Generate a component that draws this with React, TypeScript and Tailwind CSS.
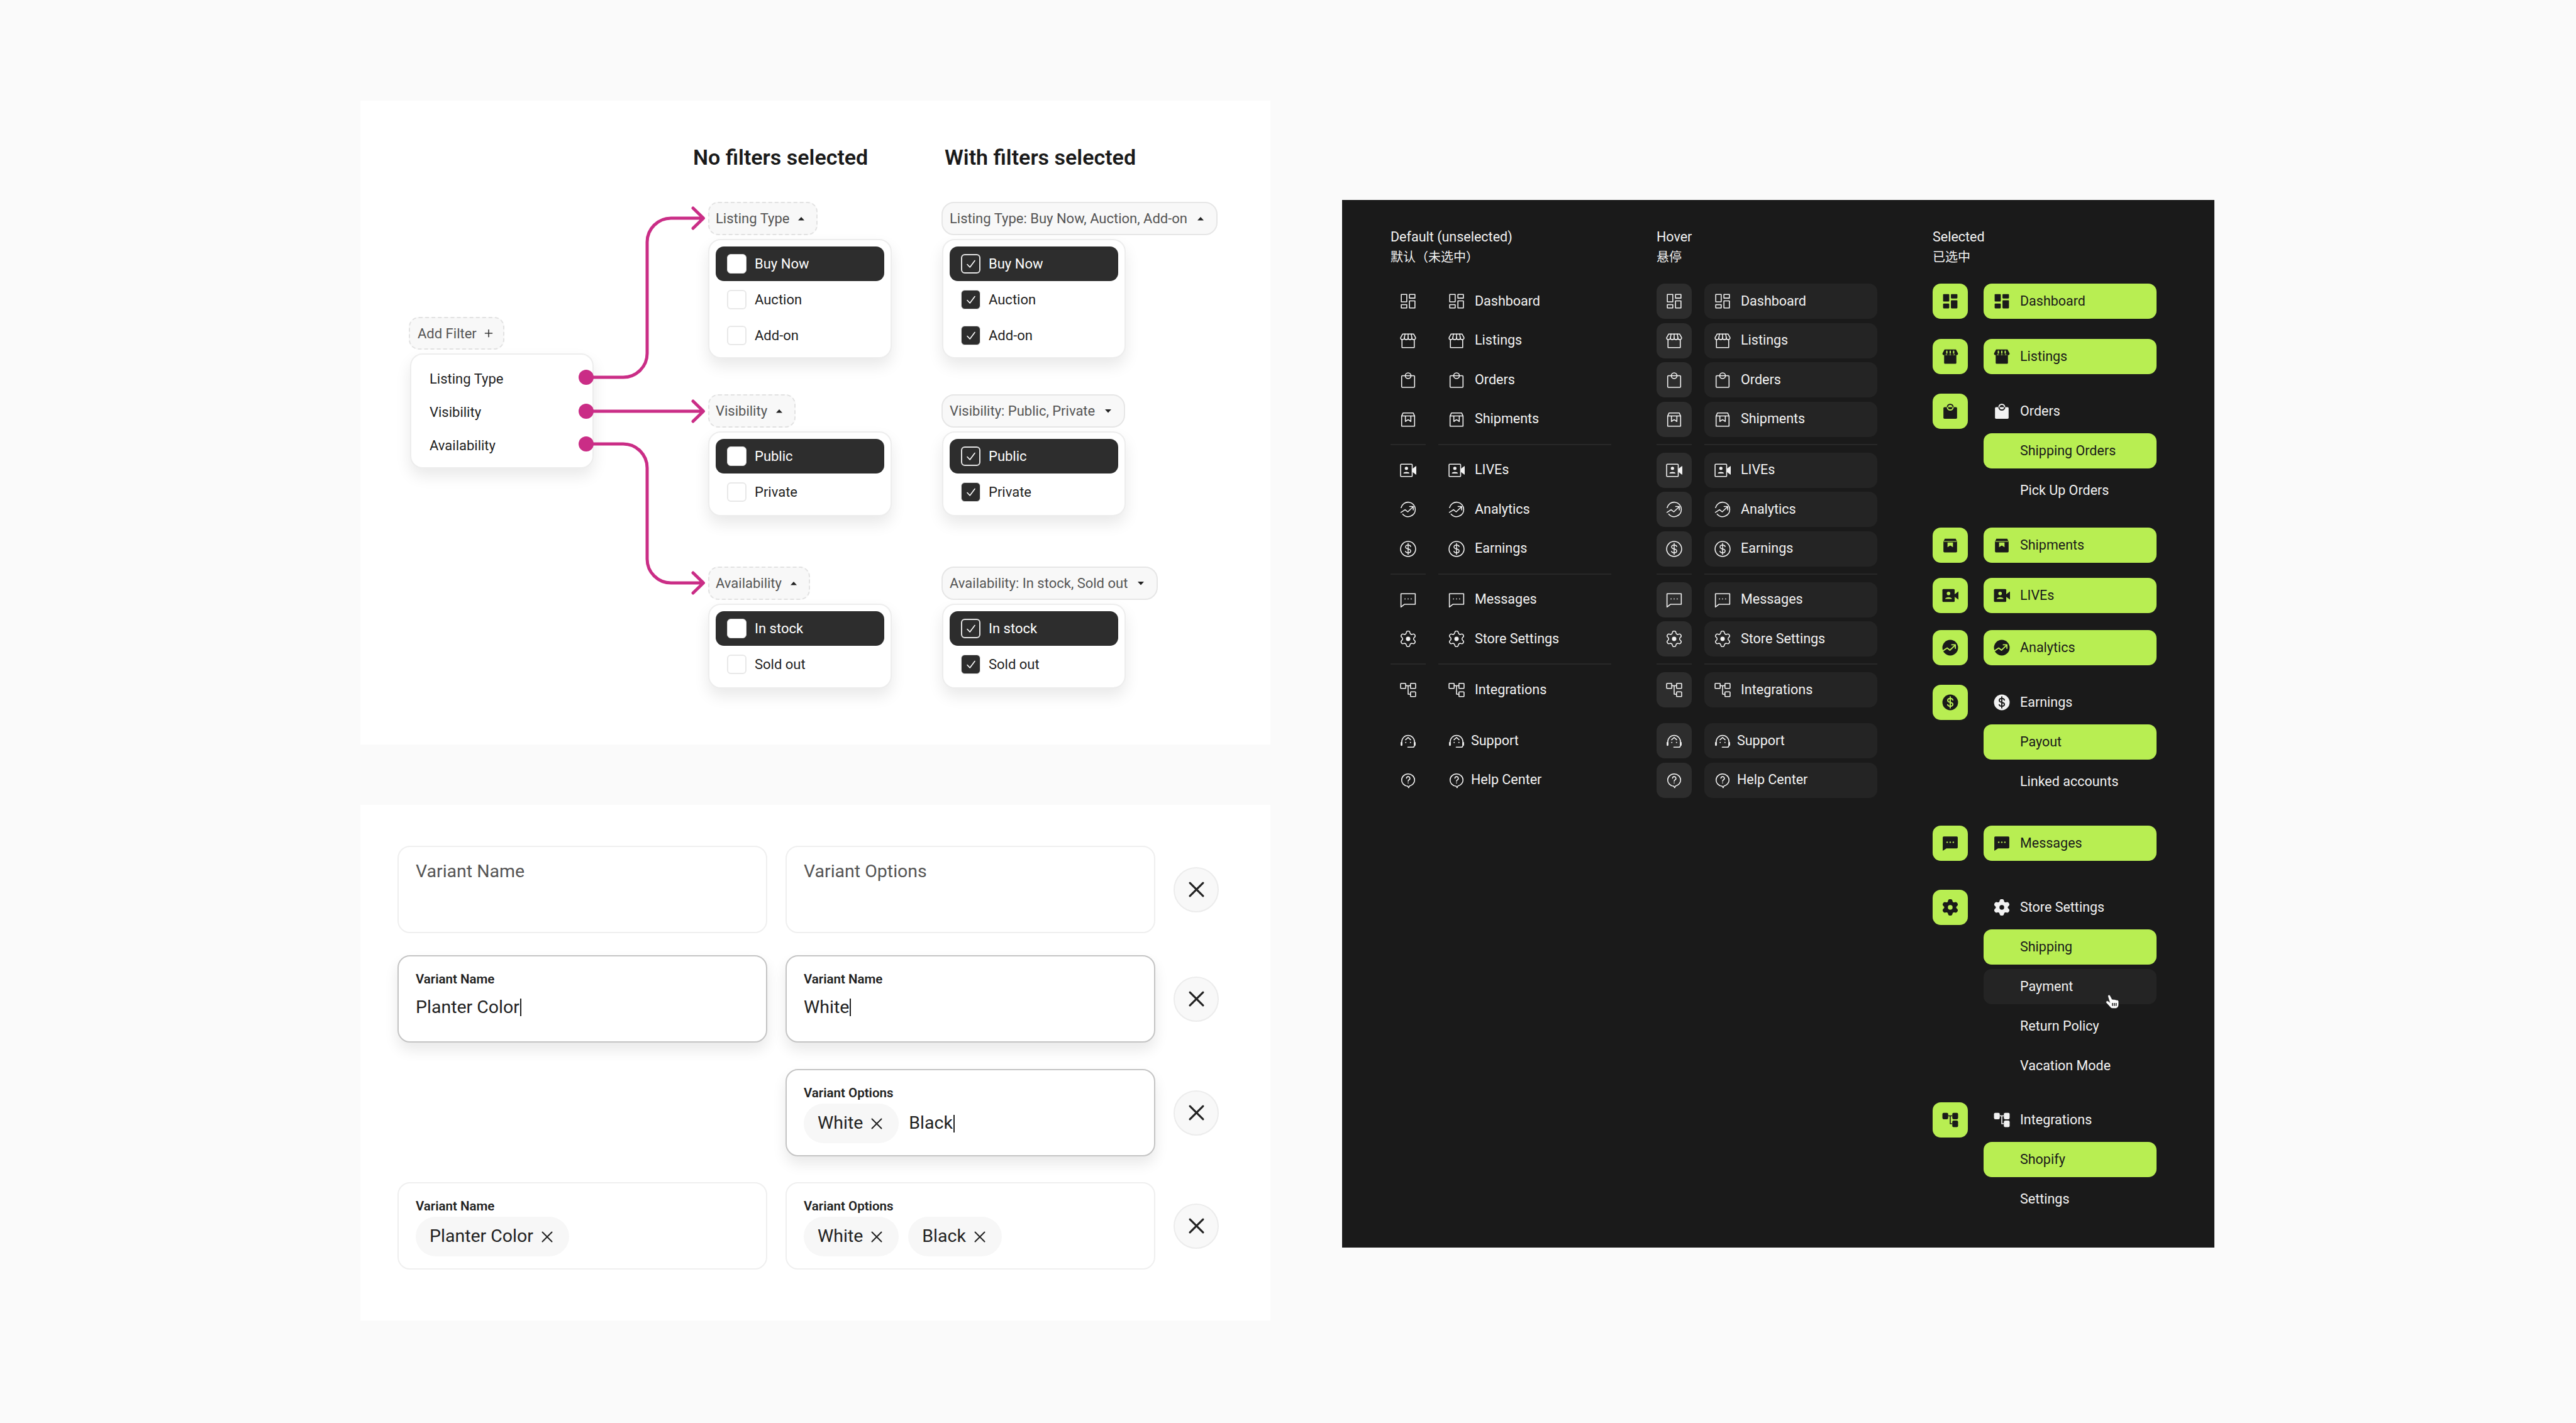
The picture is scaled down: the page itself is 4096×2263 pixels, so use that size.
import React from "react";

const GEAR =
  "M9.671 4.136a2.34 2.34 0 0 1 4.659 0 2.34 2.34 0 0 0 3.319 1.915 2.34 2.34 0 0 1 2.33 4.033 2.34 2.34 0 0 0 0 3.831 2.34 2.34 0 0 1-2.33 4.033 2.34 2.34 0 0 0-3.319 1.915 2.34 2.34 0 0 1-4.659 0 2.34 2.34 0 0 0-3.32-1.915 2.34 2.34 0 0 1-2.33-4.033 2.34 2.34 0 0 0 0-3.831A2.34 2.34 0 0 1 6.35 6.051a2.34 2.34 0 0 0 3.32-1.915";

type IconName =
  | "dashboard" | "store" | "bag" | "box" | "live" | "chart"
  | "dollar" | "message" | "gear" | "tree" | "support" | "help";

function Icon({ name, filled, cut }: { name: IconName; filled?: boolean; cut?: string }) {
  const c = "currentColor";
  const k = cut ?? "#1a1a1a";
  const line = { fill: "none", stroke: c, strokeWidth: 1.45, strokeLinejoin: "round" as const, strokeLinecap: "round" as const };
  let body: React.ReactNode = null;
  switch (name) {
    case "dashboard":
      body = filled ? (
        <g fill={c}>
          <rect x="1.5" y="1.5" width="9" height="11" rx="1" />
          <rect x="13" y="1.5" width="9.5" height="6.5" rx="1" />
          <rect x="1.5" y="15.5" width="9" height="7" rx="1" />
          <rect x="13" y="10.5" width="9.5" height="12" rx="1" />
        </g>
      ) : (
        <g {...line}>
          <rect x="2" y="2" width="8" height="11" />
          <rect x="14" y="2" width="8" height="5.5" />
          <rect x="2" y="17" width="8" height="5" />
          <rect x="14" y="11.5" width="8" height="10.5" />
        </g>
      );
      break;
    case "store":
      body = filled ? (
        <g>
          <path d="M3 10H21V21.5a1 1 0 0 1-1 1H4a1 1 0 0 1-1-1Z" fill={c} />
          <path d="M3.6 1.5H20.4L23.5 7.5a2.9 2.9 0 0 1-5.75 0 2.9 2.9 0 0 1-5.75 0 2.9 2.9 0 0 1-5.75 0 2.9 2.9 0 0 1-5.75 0Z" fill={c} />
          <path d="M7 4.2V7M12 4.2V7M17 4.2V7" stroke={k} strokeWidth="1.9" strokeLinecap="round" fill="none" />
        </g>
      ) : (
        <g {...line}>
          <path d="M3 10.5V22H21V10.5" />
          <path d="M4 2H20L23 7.5a2.75 2.75 0 0 1-5.5 0 2.75 2.75 0 0 1-5.5 0 2.75 2.75 0 0 1-5.5 0 2.75 2.75 0 0 1-5.5 0Z" />
          <path d="M6.5 7.5 7.5 2M12 7.5V2M17.5 7.5 16.5 2" />
        </g>
      );
      break;
    case "bag":
      body = filled ? (
        <g>
          <rect x="2" y="6" width="20" height="17" rx="1.5" fill={c} />
          <path d="M7.8 6a4.2 4.2 0 0 1 8.4 0" fill="none" stroke={c} strokeWidth="1.8" />
          <path d="M7.8 6a4.2 4.2 0 0 0 8.4 0" fill="none" stroke={k} strokeWidth="1.8" />
        </g>
      ) : (
        <g {...line}>
          <rect x="2.5" y="6" width="19" height="17" rx="1" />
          <circle cx="12" cy="6" r="4.2" />
        </g>
      );
      break;
    case "box":
      body = filled ? (
        <g>
          <path d="M2 7 4 2.5H20L22 7V21a1.5 1.5 0 0 1-1.5 1.5H3.5A1.5 1.5 0 0 1 2 21Z" fill={c} />
          <path d="M2.5 6.5H21.5" stroke={k} strokeWidth="1" fill="none" />
          <path d="M8 8h8v7l-4-2.6L8 15Z" fill={k} />
        </g>
      ) : (
        <g {...line}>
          <path d="M2.5 7 4.5 2.5H19.5L21.5 7V22H2.5Z" />
          <path d="M2.5 7H21.5" />
          <path d="M8 7V15L12 12.4 16 15V7" />
        </g>
      );
      break;
    case "live":
      body = filled ? (
        <g>
          <rect x="0.5" y="2.5" width="18" height="19" rx="1.5" fill={c} />
          <path d="M18 10.5 24 6V18L18 13.5Z" fill={c} />
          <circle cx="9.5" cy="9" r="2.6" fill={k} />
          <path d="M4.5 17c.5-3.4 9.5-3.4 10 0Z" fill={k} />
        </g>
      ) : (
        <g {...line}>
          <rect x="1" y="3" width="17" height="18" rx="1" />
          <path d="M18.5 10.5 23.5 6.5V17.5L18.5 13.5Z" fill={c} />
          <circle cx="9.5" cy="9" r="2.4" fill={c} stroke="none" />
          <path d="M5 16.5c.5-3 8.5-3 9 0Z" fill={c} stroke="none" />
        </g>
      );
      break;
    case "chart":
      body = filled ? (
        <g>
          <circle cx="12" cy="12" r="11.5" fill={c} />
          <path d="M1.5 16.5 7.5 12.5l4 3.2L19 8.5M14.2 7.8H19.5V13" fill="none" stroke={k} strokeWidth="1.7" strokeLinecap="round" strokeLinejoin="round" />
        </g>
      ) : (
        <g {...line}>
          <path d="M1.8 9.5A10.5 10.5 0 0 1 22.5 12 10.5 10.5 0 0 1 4 19" />
          <path d="M1.5 16.5 7.5 12.5l4 3.2L19 8.5M14.2 7.8H19.5V13" />
        </g>
      );
      break;
    case "dollar":
      body = (
        <g>
          <circle cx="12" cy="12" r={filled ? 11.5 : 11} fill={filled ? c : "none"} stroke={filled ? "none" : c} strokeWidth="1.45" />
          <path
            d="M15.8 8.5C15.3 7 13.7 6.3 12 6.3 10 6.3 8.3 7.4 8.3 9.2 8.3 13.2 15.8 10.8 15.8 14.8 15.8 16.6 14.1 17.7 12 17.7 10.2 17.7 8.7 17 8.2 15.5M12 4V20"
            fill="none"
            stroke={filled ? k : c}
            strokeWidth={filled ? 1.8 : 1.35}
            strokeLinecap="round"
          />
        </g>
      );
      break;
    case "message":
      body = filled ? (
        <g>
          <path d="M2.5 2H21.5a1.5 1.5 0 0 1 1.5 1.5V18a1.5 1.5 0 0 1-1.5 1.5H6.5L1 23V3.5A1.5 1.5 0 0 1 2.5 2Z" fill={c} />
          <g fill={k}>
            <circle cx="7.5" cy="10.5" r="1.1" />
            <circle cx="12" cy="10.5" r="1.1" />
            <circle cx="16.5" cy="10.5" r="1.1" />
          </g>
        </g>
      ) : (
        <g>
          <path d="M1.5 3H22.5V18.5H6.5L1.5 22.5Z" {...line} />
          <g fill={c}>
            <circle cx="7.5" cy="10.5" r="0.8" />
            <circle cx="12" cy="10.5" r="0.8" />
            <circle cx="16.5" cy="10.5" r="0.8" />
          </g>
        </g>
      );
      break;
    case "gear":
      body = (
        <g transform="translate(-1.8 -1.8) scale(1.15)">
          <path d={GEAR} fill={filled ? c : "none"} stroke={c} strokeWidth={1.25} strokeLinejoin="round" />
          <circle cx="12" cy="12" r={filled ? 3 : 2.8} fill={filled ? k : c} />
        </g>
      );
      break;
    case "tree":
      body = filled ? (
        <g>
          <path d="M9 6H15M12 6V17.5H15" fill="none" stroke={c} strokeWidth="1.5" />
          <rect x="0.5" y="1.5" width="8.5" height="9.5" rx="2" fill={c} />
          <rect x="15" y="1.5" width="8.5" height="9.5" rx="2" fill={c} />
          <rect x="15" y="13" width="8.5" height="9.5" rx="2" fill={c} />
        </g>
      ) : (
        <g {...line}>
          <rect x="1" y="2.5" width="7.5" height="7.5" rx="0.8" />
          <rect x="15.5" y="2.5" width="7.5" height="7.5" rx="0.8" />
          <rect x="15.5" y="15" width="7.5" height="7" rx="0.8" />
          <path d="M8.5 6H15.5M12 6V18.5H15.5" />
        </g>
      );
      break;
    case "support":
      body = (
        <g>
          <path d="M2.7 13.5A9.3 9.3 0 0 1 21.3 13.5" {...line} />
          <path d="M8.3 10.5 12 7.3l3.7 3.2" {...line} />
          <path d="M21 19.5Q21 21.5 18.5 21.5H11.5" {...line} />
          <rect x="1" y="13.5" width="2.6" height="6" rx="1.2" fill={c} />
          <rect x="20.4" y="13.5" width="2.6" height="6" rx="1.2" fill={c} />
          <circle cx="8.5" cy="14.5" r="0.9" fill={c} />
          <circle cx="15.5" cy="14.5" r="0.9" fill={c} />
        </g>
      );
      break;
    case "help":
      body = (
        <g>
          <path d="M2.5 11.5a9.5 9 0 0 1 19 0 9.5 9 0 0 1-7.5 8.8L12.8 22.7 11.3 20.5A9.5 9 0 0 1 2.5 11.5Z" {...line} />
          <path d="M9.6 9a2.5 2.5 0 1 1 3.6 2.3c-.8.5-1.2 1-1.2 2" {...line} />
          <circle cx="12" cy="15.8" r="0.8" fill={c} />
        </g>
      );
      break;
  }
  return (
    <svg viewBox="0 0 24 24" className="w-[26px] h-[26px] shrink-0">
      {body}
    </svg>
  );
}

function Hand() {
  return (
    <svg viewBox="0 0 24 24" className="w-[23px] h-[24px]">
      <path
        d="M4.5 3C4 1.5 6 .5 7 2L11 9.5V9c1-.8 2-.5 2.5.3.7-.7 2-.5 2.5.4.8-.6 2-.3 2.5.5.9-.5 2.2-.2 2.5 1V17c0 3-1.5 5.5-4.5 5.5H12c-2 0-3.5-1-4.5-2.5L1.5 13.5C.5 12 2.5 10.5 4 11.5L8 14.5Z"
        fill="#fff"
        stroke="#fff"
        strokeWidth="0.6"
        strokeLinejoin="round"
      />
      <path d="M11.5 14v5M14.5 14v5M17.5 14v5" stroke="#111" strokeWidth="1.5" />
    </svg>
  );
}

function Caret({ down }: { down?: boolean }) {
  return (
    <svg viewBox="0 0 12 7" className="w-[12px] h-[7px] shrink-0">
      <path d={down ? "M1 1H11L6 6.5Z" : "M1 6.5H11L6 1Z"} fill="#222" />
    </svg>
  );
}

function Check() {
  return (
    <svg viewBox="0 0 20 20" className="w-[20px] h-[20px]">
      <path d="M4 10.5 8.2 15 16 4.5" fill="none" stroke="#fff" strokeWidth="1.6" strokeLinecap="round" strokeLinejoin="round" />
    </svg>
  );
}

function Box({ state }: { state: "empty" | "white" | "ghost" | "dark" }) {
  if (state === "white") return <span className="w-[31px] h-[31px] rounded-[6px] bg-white border border-[#ddd] shrink-0" />;
  if (state === "empty") return <span className="w-[31px] h-[31px] rounded-[6px] bg-white border-2 border-[#e8e8e8] shrink-0" />;
  if (state === "ghost")
    return (
      <span className="w-[31px] h-[31px] rounded-[6px] border-2 border-[#e4e4e4] shrink-0 flex items-center justify-center">
        <Check />
      </span>
    );
  return (
    <span className="w-[31px] h-[31px] rounded-[6px] bg-[#2d2d2d] border border-[#ddd] shrink-0 flex items-center justify-center">
      <Check />
    </span>
  );
}

function FilterChip({ label, dashed, down }: { label: string; dashed?: boolean; down?: boolean }) {
  return (
    <div
      className={
        dashed
          ? "w-max h-[53px] flex items-center gap-[13px] pl-[10px] pr-[18px] rounded-[16px] border-2 border-dashed border-[#e2e2e2] bg-[#f8f8f8] text-[22px] text-[#555] whitespace-nowrap"
          : "w-max h-[53px] flex items-center gap-[15px] pl-[11px] pr-[19px] rounded-[20px] border-2 border-[#e6e6e6] bg-[#f8f8f8] text-[22px] text-[#555] whitespace-nowrap"
      }
    >
      <span>{label}</span>
      <Caret down={down} />
    </div>
  );
}

function OptionBox({ options, checked, tall }: { options: string[]; checked?: boolean; tall?: boolean }) {
  return (
    <div
      className={
        (tall ? "h-[190px]" : "h-[135px]") +
        (checked ? " ml-[1px]" : "") +
        " mt-[6px] w-[292px] flex flex-col gap-[2px] p-[10px] rounded-[20px] border-2 border-[#ededed] bg-white shadow-[0_12px_24px_rgba(0,0,0,0.09)]"
      }
    >
      {options.map((o, i) => (
        <div
          key={o}
          className={
            i === 0
              ? "h-[55px] shrink-0 flex items-center gap-[13px] pl-[18px] rounded-[13px] bg-[#2d2d2d] text-white text-[22px]"
              : "h-[55px] shrink-0 flex items-center gap-[13px] pl-[18px] text-[#1f1f1f] text-[22px]"
          }
        >
          <Box state={i === 0 ? (checked ? "ghost" : "white") : checked ? "dark" : "empty"} />
          <span>{o}</span>
        </div>
      ))}
    </div>
  );
}

function Connectors() {
  const s = { fill: "none", stroke: "#ca2d86", strokeWidth: 5, strokeLinecap: "round" as const, strokeLinejoin: "round" as const };
  return (
    <svg viewBox="0 0 1447 1024" className="absolute inset-0 w-[1447px] h-[1024px] pointer-events-none">
      <path d="M359 440H418A38 38 0 0 0 456 402V225A38 38 0 0 1 494 187H545M529 171 545.5 187 529 203" {...s} />
      <path d="M359 494H545M529 478 545.5 494 529 510" {...s} />
      <path d="M359 546H418A38 38 0 0 1 456 584V729A38 38 0 0 0 494 767H545M529 751 545.5 767 529 783" {...s} />
      <circle cx="359" cy="440" r="12" fill="#ca2d86" />
      <circle cx="359" cy="494" r="12" fill="#ca2d86" />
      <circle cx="359" cy="546" r="12" fill="#ca2d86" />
    </svg>
  );
}

function FilterPanel() {
  return (
    <section className="relative h-[1024px] w-[1447px] bg-white flex pl-[77px]">
      <div className="w-[292px] pt-[344px] flex flex-col">
        <div className="w-[152px] h-[52px] flex items-center gap-[12px] pl-[12px] rounded-[16px] border-2 border-dashed border-[#e2e2e2] bg-[#f8f8f8] text-[22px] text-[#555] whitespace-nowrap">
          <span>Add Filter</span>
          <svg viewBox="0 0 16 16" className="w-[14px] h-[14px]">
            <path d="M8 1V15M1 8H15" stroke="#333" strokeWidth="1.8" />
          </svg>
        </div>
        <div className="ml-[2px] mt-[6px] h-[183px] w-[292px] pl-[29px] pt-[12px] rounded-[20px] border-2 border-[#ededed] bg-white shadow-[0_12px_24px_rgba(0,0,0,0.09)] text-[22px] text-[#1f1f1f] flex flex-col">
          <div className="h-[53px] flex items-center">Listing Type</div>
          <div className="h-[53px] flex items-center">Visibility</div>
          <div className="h-[53px] flex items-center">Availability</div>
        </div>
      </div>
      <div className="ml-[184px] w-[292px] pt-[70px] flex flex-col">
        <h2 className="-ml-[24px] h-[40px] leading-[40px] text-[34px] font-semibold text-[#1a1a1a] whitespace-nowrap">No filters selected</h2>
        <div className="mt-[51px]"><FilterChip dashed label="Listing Type" /></div>
        <OptionBox tall options={["Buy Now", "Auction", "Add-on"]} />
        <div className="mt-[57px]"><FilterChip dashed label="Visibility" /></div>
        <OptionBox options={["Public", "Private"]} />
        <div className="mt-[80px]"><FilterChip dashed label="Availability" /></div>
        <OptionBox options={["In stock", "Sold out"]} />
      </div>
      <div className="ml-[79px] w-[292px] pt-[70px] flex flex-col">
        <h2 className="ml-[5px] h-[40px] leading-[40px] text-[34px] font-semibold text-[#1a1a1a] whitespace-nowrap">With filters selected</h2>
        <div className="mt-[51px]"><FilterChip label="Listing Type: Buy Now, Auction, Add-on" /></div>
        <OptionBox tall checked options={["Buy Now", "Auction", "Add-on"]} />
        <div className="mt-[57px]"><FilterChip down label="Visibility: Public, Private" /></div>
        <OptionBox checked options={["Public", "Private"]} />
        <div className="mt-[80px]"><FilterChip down label="Availability: In stock, Sold out" /></div>
        <OptionBox checked options={["In stock", "Sold out"]} />
      </div>
      <Connectors />
    </section>
  );
}

function XMark({ big }: { big?: boolean }) {
  return (
    <svg viewBox="0 0 18 18" className={big ? "w-[25px] h-[25px] shrink-0" : "w-[18px] h-[18px] shrink-0"}>
      <path d="M1.5 1.5 16.5 16.5M16.5 1.5 1.5 16.5" stroke="#222" strokeWidth={big ? 2.2 : 2} strokeLinecap="round" />
    </svg>
  );
}

function TagChip({ text }: { text: string }) {
  return (
    <span className="h-[63px] flex items-center gap-[13px] pl-[22px] pr-[26px] rounded-full bg-[#f7f7f7] text-[28.5px] text-[#222] whitespace-nowrap">
      {text}
      <XMark />
    </span>
  );
}

function Cursor() {
  return <span className="inline-block w-[2px] h-[28px] bg-[#222] ml-[1px]" />;
}

function Field({ label, focused, children }: { label?: string; focused?: boolean; children?: React.ReactNode }) {
  return (
    <div
      className={
        "h-[139px] rounded-[20px] bg-white pl-[27px] pt-[23px] " +
        (focused ? "border-2 border-[#c4c4c4] shadow-[0_12px_22px_rgba(0,0,0,0.09)]" : "border-2 border-[#efefef]")
      }
    >
      {label ? (
        <>
          <div className="h-[26px] leading-[26px] text-[20.5px] font-semibold text-[#222]">{label}</div>
          <div className="mt-[4px]">{children}</div>
        </>
      ) : (
        children
      )}
    </div>
  );
}

function Typed({ children }: { children: React.ReactNode }) {
  return <div className="h-[56px] flex items-center text-[28.5px] text-[#222]">{children}</div>;
}

function Placeholder({ text }: { text: string }) {
  return <div className="h-[32px] leading-[32px] text-[28.5px] text-[#555]">{text}</div>;
}

function CloseButton() {
  return (
    <div className="w-[72px] h-[72px] rounded-full bg-[#f8f8f8] border-2 border-[#ececec] flex items-center justify-center">
      <XMark big />
    </div>
  );
}

function VariantPanel() {
  return (
    <section className="mt-[96px] h-[820px] w-[1447px] bg-white pl-[59px] pt-[65px] flex flex-col">
      <div className="grid grid-cols-[588px_588px_72px] gap-x-[29px] items-center">
        <Field><Placeholder text="Variant Name" /></Field>
        <Field><Placeholder text="Variant Options" /></Field>
        <CloseButton />
      </div>
      <div className="mt-[35px] grid grid-cols-[588px_588px_72px] gap-x-[29px] items-center">
        <Field focused label="Variant Name"><Typed>Planter Color<Cursor /></Typed></Field>
        <Field focused label="Variant Name"><Typed>White<Cursor /></Typed></Field>
        <CloseButton />
      </div>
      <div className="mt-[42px] grid grid-cols-[588px_588px_72px] gap-x-[29px] items-center">
        <div />
        <Field focused label="Variant Options">
          <div className="flex items-center gap-[16px]">
            <TagChip text="White" />
            <Typed>Black<Cursor /></Typed>
          </div>
        </Field>
        <CloseButton />
      </div>
      <div className="mt-[41px] grid grid-cols-[588px_588px_72px] gap-x-[29px] items-center">
        <Field label="Variant Name"><div className="flex"><TagChip text="Planter Color" /></div></Field>
        <Field label="Variant Options">
          <div className="flex items-center gap-[15px]">
            <TagChip text="White" />
            <TagChip text="Black" />
          </div>
        </Field>
        <CloseButton />
      </div>
    </section>
  );
}

function StateRow({ icon, label, hover, tight }: { icon: IconName; label: string; hover?: boolean; tight?: boolean }) {
  return (
    <div className="flex gap-[20px] h-[56px]">
      <div className={"w-[56px] h-[56px] rounded-[13px] flex items-center justify-center text-[#f2f2f2] " + (hover ? "bg-[#2d2d2d]" : "")}>
        <Icon name={icon} />
      </div>
      <div
        className={
          "w-[275px] h-[56px] rounded-[13px] flex items-center pl-[16px] text-[21.5px] text-[#f2f2f2] " +
          (tight ? "gap-[10px] " : "gap-[16px] ") +
          (hover ? "bg-[#242424]" : "")
        }
      >
        <Icon name={icon} />
        <span>{label}</span>
      </div>
    </div>
  );
}

function Divider() {
  return (
    <div className="flex gap-[20px] mt-[11px] mb-[12px]">
      <div className="w-[56px] h-[2px] bg-[#282828]" />
      <div className="w-[275px] h-[2px] bg-[#282828]" />
    </div>
  );
}

function Title({ en, zh }: { en: string; zh: string }) {
  return (
    <div className="pt-[42px] h-[133px] text-[#f2f2f2]">
      <div className="h-[33px] leading-[33px] text-[21.5px]">{en}</div>
      <div className="h-[33px] leading-[33px] text-[20px]">{zh}</div>
    </div>
  );
}

function StateColumn({ title, zh, hover }: { title: string; zh: string; hover?: boolean }) {
  return (
    <div className="w-[351px] flex flex-col">
      <Title en={title} zh={zh} />
      <div className="flex flex-col gap-[6.5px]">
        <StateRow hover={hover} icon="dashboard" label="Dashboard" />
        <StateRow hover={hover} icon="store" label="Listings" />
        <StateRow hover={hover} icon="bag" label="Orders" />
        <StateRow hover={hover} icon="box" label="Shipments" />
      </div>
      <Divider />
      <div className="flex flex-col gap-[6.5px]">
        <StateRow hover={hover} icon="live" label="LIVEs" />
        <StateRow hover={hover} icon="chart" label="Analytics" />
        <StateRow hover={hover} icon="dollar" label="Earnings" />
      </div>
      <Divider />
      <div className="flex flex-col gap-[6.5px]">
        <StateRow hover={hover} icon="message" label="Messages" />
        <StateRow hover={hover} icon="gear" label="Store Settings" />
      </div>
      <Divider />
      <StateRow hover={hover} icon="tree" label="Integrations" />
      <div className="mt-[25px] flex flex-col gap-[6.5px]">
        <StateRow hover={hover} tight icon="support" label="Support" />
        <StateRow hover={hover} tight icon="help" label="Help Center" />
      </div>
    </div>
  );
}

const LIME = "#b8ee52";

function GreenIcon({ name }: { name: IconName }) {
  return (
    <div className="w-[56px] h-[56px] rounded-[13px] bg-[#b8ee52] flex items-center justify-center text-[#1a1a1a] shrink-0">
      <Icon name={name} filled cut={LIME} />
    </div>
  );
}

function GreenRow({ icon, label, mt }: { icon: IconName; label: string; mt: string }) {
  return (
    <div className={"flex gap-[25px] " + mt}>
      <GreenIcon name={icon} />
      <div className="w-[275px] h-[56px] rounded-[13px] bg-[#b8ee52] flex items-center gap-[16px] pl-[16px] text-[21.5px] text-[#1a1a1a]">
        <Icon name={icon} filled cut={LIME} />
        <span>{label}</span>
      </div>
    </div>
  );
}

function SubItem({ label, active, hover, children }: { label: string; active?: boolean; hover?: boolean; children?: React.ReactNode }) {
  return (
    <div
      className={
        "relative w-[275px] h-[56px] rounded-[13px] flex items-center pl-[58px] text-[21.5px] " +
        (active ? "bg-[#b8ee52] text-[#1a1a1a]" : hover ? "bg-[#242424] text-[#f2f2f2]" : "text-[#f2f2f2]")
      }
    >
      {label}
      {children}
    </div>
  );
}

function GreenGroup({ icon, label, mt, children }: { icon: IconName; label: string; mt: string; children: React.ReactNode }) {
  return (
    <div className={"flex gap-[25px] " + mt}>
      <GreenIcon name={icon} />
      <div className="flex flex-col gap-[7px]">
        <div className="w-[275px] h-[56px] flex items-center gap-[16px] pl-[16px] text-[21.5px] text-[#f2f2f2]">
          <Icon name={icon} filled cut="#1a1a1a" />
          <span>{label}</span>
        </div>
        {children}
      </div>
    </div>
  );
}

function SelectedColumn() {
  return (
    <div className="w-[356px] flex flex-col">
      <Title en="Selected" zh="已选中" />
      <GreenRow icon="dashboard" label="Dashboard" mt="mt-0" />
      <GreenRow icon="store" label="Listings" mt="mt-[32px]" />
      <GreenGroup icon="bag" label="Orders" mt="mt-[31px]">
        <SubItem active label="Shipping Orders" />
        <SubItem label="Pick Up Orders" />
      </GreenGroup>
      <GreenRow icon="box" label="Shipments" mt="mt-[31px]" />
      <GreenRow icon="live" label="LIVEs" mt="mt-[24px]" />
      <GreenRow icon="chart" label="Analytics" mt="mt-[27px]" />
      <GreenGroup icon="dollar" label="Earnings" mt="mt-[31px]">
        <SubItem active label="Payout" />
        <SubItem label="Linked accounts" />
      </GreenGroup>
      <GreenRow icon="message" label="Messages" mt="mt-[42px]" />
      <GreenGroup icon="gear" label="Store Settings" mt="mt-[46px]">
        <SubItem active label="Shipping" />
        <SubItem hover label="Payment">
          <span className="absolute left-[194px] top-[40px]">
            <Hand />
          </span>
        </SubItem>
        <SubItem label="Return Policy" />
        <SubItem label="Vacation Mode" />
      </GreenGroup>
      <GreenGroup icon="tree" label="Integrations" mt="mt-[30px]">
        <SubItem active label="Shopify" />
        <SubItem label="Settings" />
      </GreenGroup>
    </div>
  );
}

function NavPanel() {
  return (
    <section className="ml-[114px] mt-[158px] w-[1387px] h-[1666px] bg-[#1a1a1a] flex pl-[77px]">
      <StateColumn title="Default (unselected)" zh="默认（未选中）" />
      <div className="ml-[72px]">
        <StateColumn title="Hover" zh="悬停" hover />
      </div>
      <div className="ml-[88px]">
        <SelectedColumn />
      </div>
    </section>
  );
}

export default function App() {
  return (
    <div className="w-[4096px] h-[2263px] bg-[#fafafa] overflow-hidden flex pl-[573px] pt-[160px] font-['Roboto','Noto_Sans_CJK_SC',sans-serif]">
      <div className="flex flex-col w-[1447px] shrink-0">
        <FilterPanel />
        <VariantPanel />
      </div>
      <NavPanel />
    </div>
  );
}
